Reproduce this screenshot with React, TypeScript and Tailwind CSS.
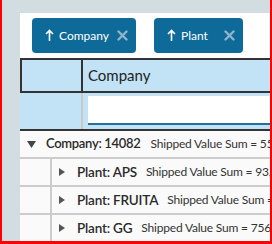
import React from 'react';

const font = { fontFamily: '"Lato", "Open Sans", sans-serif' };

const CloseX = () => (
  <svg width="11" height="11" viewBox="0 0 11 11" className="shrink-0">
    <path d="M1.5 1.5 L9.5 9.5 M9.5 1.5 L1.5 9.5" stroke="#8fb4cc" strokeWidth="2.4" strokeLinecap="round" />
  </svg>
);

const UpArrow = () => (
  <svg width="9" height="13" viewBox="0 0 9 13" className="shrink-0">
    <path d="M4.5 12 L4.5 2 M1 5 L4.5 1.5 L8 5" stroke="#ffffff" strokeWidth="1.6" fill="none" />
  </svg>
);

const GroupChip = ({ label, width }: { label: string; width: string }) => (
  <div className={`h-[35px] ${width} shrink-0 rounded-[4px] bg-[#0e6a98] flex items-center pl-[13px] pr-[8px] text-white text-[12px]`}>
    <UpArrow />
    <span className="ml-[5px]">{label}</span>
    <span className="ml-auto"><CloseX /></span>
  </div>
);

const TriDown = () => (
  <svg width="9" height="7" viewBox="0 0 9 7" className="shrink-0"><path d="M0 0 L9 0 L4.5 7 Z" fill="#444444" /></svg>
);

const TriRight = () => (
  <svg width="6" height="8" viewBox="0 0 6 8" className="shrink-0"><path d="M0 0 L6 4 L0 8 Z" fill="#555555" /></svg>
);

const plants = [
  { name: 'APS', sum: '93,' },
  { name: 'FRUITA', sum: '' },
  { name: 'GG', sum: '756,' },
];

export default function App() {
  return (
    <div className="w-[272px] h-[244px] overflow-hidden border-l-2 border-r-2 border-b-[3px] border-[#ff0000] bg-[#d2dde2] pt-[13px] pl-[18px]" style={font}>
      <div className="bg-white h-full w-[250px] flex flex-col overflow-hidden">
        {/* group-by toolbar */}
        <div className="h-[45px] shrink-0 flex items-start pt-[5px] pl-[12px] gap-[18px]">
          <GroupChip label="Company" width="w-[104px]" />
          <GroupChip label="Plant" width="w-[89px]" />
        </div>

        {/* header */}
        <div className="h-[35px] shrink-0 flex bg-[#c2e3f5] border-t-2 border-b-2 border-l-2 border-[#333333]">
          <div className="w-[61px] shrink-0 border-r-2 border-[#333333]" />
          <div className="flex-1 flex items-center pl-[5px] text-[15px] text-[#222]">Company</div>
        </div>

        {/* filter row */}
        <div className="h-[38px] shrink-0 flex bg-[#c2e3f5] border-b-2 border-[#333333]">
          <div className="w-[63px] shrink-0 border-r-2 border-[#c8c8c8]" />
          <div className="flex-1 pl-[5px] pt-[3px]">
            <div className="h-[29px] bg-white border-b-2 border-[#1f6fa0]" />
          </div>
        </div>

        {/* company group */}
        <div className="h-[28px] shrink-0 flex items-center bg-[#fafafa] border-b-2 border-[#cccccc] pl-[7px] whitespace-nowrap overflow-hidden">
          <TriDown />
          <span className="ml-[10px] shrink-0 text-[13px] font-semibold tracking-[-0.3px] text-[#2a2a2a]">Company: 14082</span>
          <span className="ml-[10px] shrink-0 text-[12px] tracking-[-0.2px] text-[#333]">Shipped Value Sum = 55</span>
        </div>

        {plants.map((p) => (
          <div key={p.name} className="h-[28px] shrink-0 flex bg-[#fafafa] border-b-2 border-[#cccccc] whitespace-nowrap overflow-hidden">
            <div className="w-[32px] shrink-0 border-r-2 border-[#cccccc]" />
            <div className="flex items-center pl-[7px] shrink-0">
              <TriRight />
              <span className="ml-[12px] shrink-0 text-[13.5px] font-semibold tracking-[-0.2px] text-[#2a2a2a]">Plant: {p.name}</span>
              <span className="ml-[9px] shrink-0 text-[12px] tracking-[-0.2px] text-[#333]">Shipped Value Sum = {p.sum}</span>
            </div>
          </div>
        ))}
      </div>
    </div>
  );
}
